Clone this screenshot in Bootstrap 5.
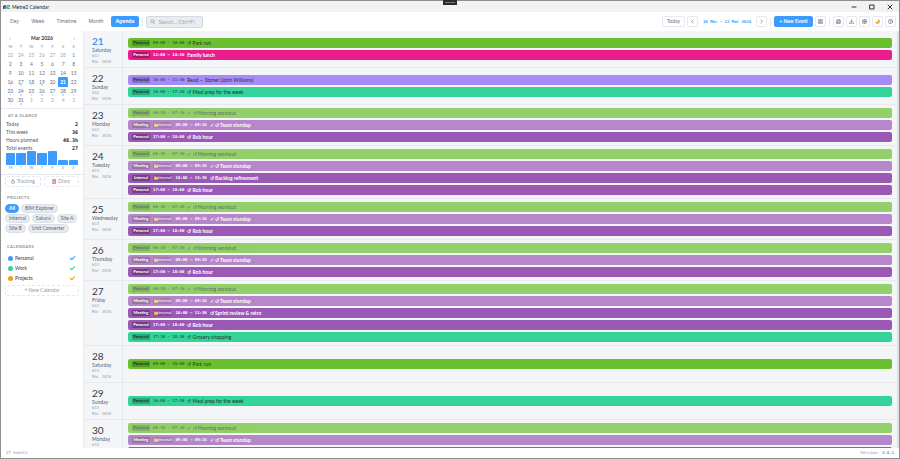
<!DOCTYPE html>
<html lang="en">
<head>
    <meta charset="UTF-8">
    <meta name="viewport" content="width=device-width, initial-scale=1.0">
    <title>Metre2 Calendar</title>
    <link href="https://cdn.jsdelivr.net/npm/bootstrap@5.3.3/dist/css/bootstrap.min.css" rel="stylesheet">
    <script src="https://cdn.jsdelivr.net/npm/bootstrap@5.3.3/dist/js/bootstrap.bundle.min.js"></script>
    <style>
        :root { --accent: #3b9bff; --line: #e6e9ed; --ink: #2f3a4a; --soft: #667181; --faint: #a3abb6; }
        body { font: 5px/6px Lato, "Liberation Sans", sans-serif; color: var(--ink); background: #8f8f8f; }
        button, input { font: inherit; color: inherit; }
        svg { display: block; fill: none; stroke: currentColor; stroke-width: 2; stroke-linecap: round; stroke-linejoin: round; }
        .mono { font-family: "DejaVu Sans Mono", monospace; font-size: 4px; }
        .app-window { padding: 1px; border-radius: 3px; }
        .snap-handle { left: 50%; top: 0; transform: translateX(-50%); width: 14px; height: 5px; padding: 2px; background: #2b2b2b; }
        .snap-handle::after { content: ""; display: block; height: 1px; background: #777; }

        .title-bar { height: 11px; background: #f2f2f2; padding: 0 6px 0 2px; gap: 2px; color: #222; }
        .app-logo { width: 7px; height: 4px; }
        .win-controls { gap: 12px; }
        .win-btn { width: 6px; height: 6px; padding: 0; border: 0; background: none; color: #333; }
        .win-btn svg { width: 6px; height: 6px; }

        .tool-bar { height: 19px; background: #fff; padding: 0 3px 0 4px; gap: 2px; }
        .view-tab { font: 5px/11px Inter, sans-serif; height: 11px; padding: 0 5px; border: 0; border-radius: 2px; background: none; color: var(--soft); }
        .view-tab.active { background: var(--accent); color: #fff; font-weight: 700; }
        .divider { width: 1px; height: 8px; background: var(--line); margin: 0 1px; }
        .search-box { width: 57px; height: 12px; border: 1px solid #d5dae1; border-radius: 2px; background: #e9edf1; padding: 0 3px; gap: 3px; color: #8b95a3; }
        .search-box svg { width: 5px; height: 5px; flex: none; }
        .search-box input { border: 0; background: none; padding: 0; min-width: 0; width: 100%; outline: 0; }
        .search-box input::placeholder { color: #9aa3af; opacity: 1; }
        .tool-btn { min-width: 11px; height: 11px; padding: 0 2px; border: 1px solid var(--line); border-radius: 2px; background: #fff; color: var(--soft); line-height: 9px; }
        .tool-btn svg { width: 5px; height: 5px; margin: auto; }
        .today-btn { width: 23px; }
        .new-btn { width: 39px; background: var(--accent); border-color: var(--accent); color: #fff; font-weight: 700; }
        .range-text { width: 54px; text-align: center; color: var(--accent); font-weight: 700; }

        .side-bar { width: 83px; background: #fff; border-right: 1px solid var(--line); }
        .side-part { padding: 0 4px; }
        .side-title { font-size: 4px; line-height: 5px; color: #87909d; letter-spacing: .1em; font-weight: 700; padding-left: 2px; margin: 0; }
        .month-head { height: 13px; padding: 1px 4px 0; }
        .month-head button { border: 0; background: none; padding: 0; color: var(--soft); }
        .mini-cal { width: 100%; height: 61px; table-layout: fixed; text-align: center; color: var(--soft); }
        .mini-cal th { font-size: 4px; color: var(--faint); }
        .mini-cal th, .mini-cal td { padding: 0; }
        .mini-cal .other { color: var(--faint); }
        .mini-cal .busy { background: radial-gradient(circle at 50% 8px, #c3dfff 0 1px, transparent 1px); }
        .mini-cal .picked { background: var(--accent); color: #fff; font-weight: 700; border-radius: 1px; }
        .glance { padding: 4px 5px 0; margin-top: 3px; border-top: 1px solid var(--line); }
        .glance dl { margin: 2px 0 0; }
        .glance dl > div { height: 8px; align-items: center; }
        .glance dt { font-weight: 400; color: #4f5a68; }
        .glance dd { margin: 0; font-weight: 700; color: #1c2430; font-size: 5px; }
        .load-chart { height: 19px; gap: 1px; margin-top: -1px; }
        .load-chart > div { flex: 1 1 0; }
        .load-chart span { background: var(--accent); border-radius: 1px 1px 0 0; }
        .load-chart small { font-size: 4px; line-height: 5px; color: #8b95a3; }
        .quick-links { margin-top: 4px; padding-top: 1px; gap: 3px; border-top: 1px solid var(--line); }
        .dashed-btn { height: 11px; padding: 0; border: 1px dashed #e4e7eb; border-radius: 2px; background: #fff; color: #929ba7; line-height: 9px; gap: 2px; }
        .dashed-btn svg { width: 4px; height: 5px; }
        .quick-links .dashed-btn { flex: 1 1 0; }
        .chip-list { gap: 1px 2px; }
        .chip-btn { height: 9px; line-height: 7px; padding: 0 3px; border: 1px solid #dadfe5; border-radius: 5px; background: #e7ebef; color: #5c6775; }
        .chip-btn.active { background: var(--accent); border-color: var(--accent); color: #fff; font-weight: 700; }
        .cal-part { padding-top: 11px; }
        .cal-item { height: 10px; padding: 0 4px 0 3px; gap: 2px; }
        .cal-item i { width: 5px; height: 5px; border-radius: 50%; background: var(--cal); }
        .cal-item input { appearance: none; width: 5px; height: 5px; margin: 0; }
        .cal-item input:checked::before { content: ""; display: block; width: 5px; height: 3px; border: solid var(--cal); border-width: 0 0 1px 1px; transform: rotate(-45deg); }
        .new-cal { margin-top: 2px; }

        .agenda { background: #f3f5f7; border-right: 2px solid #dfe1e4; }
        .day-row { border-bottom: 1px solid var(--line); min-height: 37px; flex: none; }
        .day-side { width: 39px; padding: 4px 0 0 8px; border-right: 1px solid var(--line); color: #596473; }
        .day-side .mono { color: #9ba4b0; }
        .day-num { font-size: 10px; line-height: 12px; color: var(--ink); font-weight: 400; margin: 0; }
        .is-today .day-num { color: var(--accent); font-weight: 700; }
        .day-events { padding: 3px 5px; gap: 2px; }
        .event-bar { height: 10px; padding: 0 4px; gap: 3px; border: 0; border-radius: 2px; color: #fff; text-align: left; }
        .event-bar.finished { opacity: .7; }
        .event-tag { font-size: 4px; line-height: 6px; padding: 0 1px; border-radius: 1px; background: rgba(0, 0, 0, .28); font-weight: 700; min-width: 18px; text-align: center; }
        .event-folder { font-size: 4px; line-height: 6px; padding: 0 1px; border-radius: 1px; background: rgba(0, 0, 0, .16); }
        .event-folder svg { width: 4px; height: 4px; fill: #ffc95c; stroke: #ffc95c; }
        .event-name { font-weight: 700; }
        .park, .shop, .read { color: #1d3325; }
        .park .event-name, .shop .event-name, .read .event-name { font-weight: 400; }
        .park .event-tag, .shop .event-tag, .read .event-tag { background: rgba(0, 0, 0, .2); }
        .park { background: #6abf2e; }
        .lunch { background: #e91e8c; }
        .read { background: #a78bfa; }
        .shop { background: #34d399; }
        .job { background: #9b59b6; }
        .job .mono, .lunch .mono { font-weight: 700; }
        .status-bar { height: 10px; background: #fff; padding: 0 5px; color: #8b95a3; }
        .status-bar b { color: var(--accent); }
    </style>
</head>
<body>
<div class="app-window vh-100 d-flex flex-column overflow-hidden">
    <div class="snap-handle position-absolute"></div>
    <header class="title-bar d-flex align-items-center flex-shrink-0">
        <svg class="app-logo" viewBox="0 0 14 8"><path d="M1 7V2h5v5M3.500 2v5" stroke="#2c4464"/><path d="M8 1h5v3H9v3h4" stroke="#22b8a6"/></svg>
        <span class="me-auto">Metre2 Calendar</span>
        <div class="win-controls d-flex">
            <button class="win-btn" aria-label="Minimize"><svg viewBox="0 0 12 12"><path d="M2 6h8"/></svg></button>
            <button class="win-btn" aria-label="Maximize"><svg viewBox="0 0 12 12"><rect x="2" y="2" width="8" height="8"/></svg></button>
            <button class="win-btn" aria-label="Close"><svg viewBox="0 0 12 12"><path d="M2 2l8 8M10 2l-8 8"/></svg></button>
        </div>
    </header>

    <nav class="tool-bar d-flex align-items-center flex-shrink-0">
        <button class="view-tab">Day</button>
        <button class="view-tab">Week</button>
        <button class="view-tab">Timeline</button>
        <button class="view-tab">Month</button>
        <button class="view-tab active">Agenda</button>
        <span class="divider"></span>
        <label class="search-box d-flex align-items-center me-auto">
            <svg viewBox="0 0 16 16"><circle cx="7" cy="7" r="5"/><path d="M11 11l4 4"/></svg>
            <input type="text" aria-label="Search" placeholder="Search… (Ctrl+F)">
        </label>
        <button class="tool-btn today-btn">Today</button>
        <button class="tool-btn" aria-label="Previous week"><svg viewBox="0 0 16 16"><path d="M10 3L5 8l5 5"/></svg></button>
        <span class="range-text mono">16 Mar – 22 Mar 2026</span>
        <button class="tool-btn" aria-label="Next week"><svg viewBox="0 0 16 16"><path d="M6 3l5 5-5 5"/></svg></button>
        <span class="divider"></span>
        <button class="tool-btn new-btn">+ New Event</button>
        <button class="tool-btn" aria-label="Templates"><svg viewBox="0 0 16 16"><path d="M2 2h5v5H2zM10 2h4v5h-4zM2 10h5v4H2zM10 10h4v4h-4z"/></svg></button>
        <span class="divider"></span>
        <button class="tool-btn" aria-label="Print"><svg viewBox="0 0 16 16"><path d="M4 6V1h8v5M4 12H1V6h14v6h-3M4 10h8v5H4z"/></svg></button>
        <button class="tool-btn" aria-label="Export"><svg viewBox="0 0 16 16"><path d="M8 2v8M5 7l3 3 3-3M1 11v4h14v-4"/></svg></button>
        <button class="tool-btn" aria-label="Settings"><svg viewBox="0 0 16 16"><circle cx="8" cy="8" r="2"/><circle cx="8" cy="8" r="6"/><path d="M8 0v2M8 14v2M0 8h2M14 8h2M2 2l2 2M12 12l2 2M14 2l-2 2M4 12l-2 2"/></svg></button>
        <button class="tool-btn" aria-label="Dark mode"><svg viewBox="0 0 16 16"><path d="M11 1c1 7-3 11-10 10 3 5 10 5 13 0 2-4 1-8-3-10z" fill="#f6a63c" stroke="#f6a63c"/></svg></button>
        <button class="tool-btn" aria-label="Help"><svg viewBox="0 0 16 16"><circle cx="8" cy="8" r="7"/><path d="M6 6c0-3 5-2 4 0-1 1-2 1-2 3M8 12v0"/></svg></button>
    </nav>

    <div class="d-flex flex-fill overflow-hidden">
        <aside class="side-bar flex-shrink-0">
            <div class="side-part">
                <div class="month-head d-flex justify-content-between align-items-center">
                    <button aria-label="Previous month">‹</button>
                    <strong>Mar 2026</strong>
                    <button aria-label="Next month">›</button>
                </div>
                <table class="mini-cal">
                    <thead><tr><th>M</th><th>T</th><th>W</th><th>T</th><th>F</th><th>S</th><th>S</th></tr></thead>
                    <tbody id="miniCal"></tbody>
                </table>
            </div>
            <section class="glance">
                <h2 class="side-title">AT A GLANCE</h2>
                <dl>
                    <div class="d-flex justify-content-between"><dt>Today</dt><dd class="mono">2</dd></div>
                    <div class="d-flex justify-content-between"><dt>This week</dt><dd class="mono">36</dd></div>
                    <div class="d-flex justify-content-between"><dt>Hours planned</dt><dd class="mono">48.3h</dd></div>
                    <div class="d-flex justify-content-between"><dt>Total events</dt><dd class="mono">27</dd></div>
                </dl>
                <div class="load-chart d-flex align-items-end" id="loadChart"></div>
            </section>
            <div class="side-part quick-links d-flex">
                <button class="dashed-btn d-flex align-items-center justify-content-center"><svg viewBox="0 0 12 15"><circle cx="6" cy="9" r="5"/><path d="M6 9V6M4 1h4"/></svg>Tracking</button>
                <button class="dashed-btn d-flex align-items-center justify-content-center"><svg viewBox="0 0 12 15"><path d="M1 1h10v13H1z" fill="#f3d9cf" stroke="#b0705c"/><path d="M4 5h4M4 9h4" stroke="#b0705c"/></svg>Diary</button>
            </div>
            <section class="side-part pt-2">
                <h2 class="side-title">PROJECTS</h2>
                <div class="chip-list d-flex flex-wrap mt-1">
                    <button class="chip-btn active">All</button>
                    <button class="chip-btn">BIM Explorer</button>
                    <button class="chip-btn">Internal</button>
                    <button class="chip-btn">Sakura</button>
                    <button class="chip-btn">Site A</button>
                    <button class="chip-btn">Site B</button>
                    <button class="chip-btn">Unit Converter</button>
                </div>
            </section>
            <section class="side-part cal-part">
                <h2 class="side-title">CALENDARS</h2>
                <div class="pt-1" id="calList"></div>
                <button class="dashed-btn new-cal w-100">+ New Calendar</button>
            </section>
        </aside>
        <main class="agenda flex-fill d-flex flex-column overflow-hidden" id="agenda"></main>
    </div>

    <footer class="status-bar mono d-flex align-items-center justify-content-between flex-shrink-0">
        <span>27 events</span>
        <span>Version: <b>3.0.1</b></span>
    </footer>
</div>

<script>
    const agenda = document.getElementById("agenda");
    const miniCal = document.getElementById("miniCal");
    const loadChart = document.getElementById("loadChart");
    const calList = document.getElementById("calList");
    const folder = `<svg viewBox="0 0 16 16"><path d="M1 3h5l2 2h7v9H1z"/></svg>`;

    // style, tag, time, title, folder, done
    const park = ["park", "Personal", "09:00 – 10:00", "↺ Park run"];
    const meal = ["shop", "Personal", "16:00 – 17:30", "↺ Meal prep for the week"];
    const workout = ["park", "Personal", "06:30 – 07:30", "✓ ↺ Morning workout", false, true];
    const standup = ["job", "Meeting", "09:00 – 09:15", "✓ ↺ Team standup", true, true];
    const rob = ["job", "Personal", "17:00 – 18:00", "↺ Rob hour"];

    const days = [
        [21, "Saturday", 12, [park, ["lunch", "Personal", "12:00 – 14:30", "Family lunch"]]],
        [22, "Sunday", 12, [["read", "Personal", "10:00 – 11:30", "Read — Stoner (John Williams)"], meal]],
        [23, "Monday", 13, [workout, standup, rob]],
        [24, "Tuesday", 13, [workout, standup, ["job", "Internal", "14:00 – 15:30", "↺ Backlog refinement", true], rob]],
        [25, "Wednesday", 13, [workout, standup, rob]],
        [26, "Thursday", 13, [workout, standup, rob]],
        [27, "Friday", 13, [workout, standup, ["job", "Meeting", "10:00 – 11:30", "↺ Sprint review &amp; retro", true], rob,
            ["shop", "Personal", "17:30 – 18:30", "↺ Grocery shopping"]]],
        [28, "Saturday", 13, [park]],
        [29, "Sunday", 13, [meal]],
        [30, "Monday", 13, [workout, standup, rob]]
    ];

    days.forEach(([num, name, week, events]) => {
        const bars = events.map(([kind, tag, time, title, inFolder, done]) => `
            <button class="event-bar ${kind} ${done ? "finished" : ""} d-flex align-items-center">
                <span class="event-tag">${tag}</span>
                ${inFolder ? `<span class="event-folder d-flex align-items-center">${folder}Internal</span>` : ""}
                <span class="mono">${time}</span>
                <span class="event-name">${title}</span>
            </button>`).join("");
        agenda.innerHTML += `
            <section class="day-row d-flex ${num === 21 ? "is-today" : ""}">
                <div class="day-side flex-shrink-0">
                    <h3 class="day-num">${num}</h3>
                    <div>${name}</div>
                    <div class="mono">W${week}</div>
                    <div class="mono">Mar 2026</div>
                </div>
                <div class="day-events flex-fill d-flex flex-column justify-content-center">${bars}</div>
            </section>`;
    });

    // six weeks starting on Monday 23 February
    for (let week = 0; week < 6; week++) {
        let cells = "";
        for (let d = 0; d < 7; d++) {
            const date = new Date(2026, 1, 23 + week * 7 + d);
            const num = date.getDate();
            const inMonth = date.getMonth() === 2;
            let cls = inMonth ? "" : "other";
            if (inMonth && num >= 16) cls = "busy";
            if (inMonth && num === 21) cls = "picked";
            cells += `<td class="${cls}">${num}</td>`;
        }
        miniCal.innerHTML += `<tr>${cells}</tr>`;
    }

    [["M", 12], ["T", 12], ["W", 14], ["T", 12], ["F", 14], ["S", 5], ["S", 5]].forEach(([day, height]) => {
        loadChart.innerHTML += `<div class="d-flex flex-column text-center"><span style="height: ${height}px"></span><small>${day}</small></div>`;
    });

    [["Personal", "#3b9bff"], ["Work", "#34d399"], ["Projects", "#f59e0b"]].forEach(([name, color]) => {
        calList.innerHTML += `<label class="cal-item d-flex align-items-center" style="--cal: ${color}"><i></i><span class="me-auto">${name}</span><input type="checkbox" checked></label>`;
    });
</script>
</body>
</html>
